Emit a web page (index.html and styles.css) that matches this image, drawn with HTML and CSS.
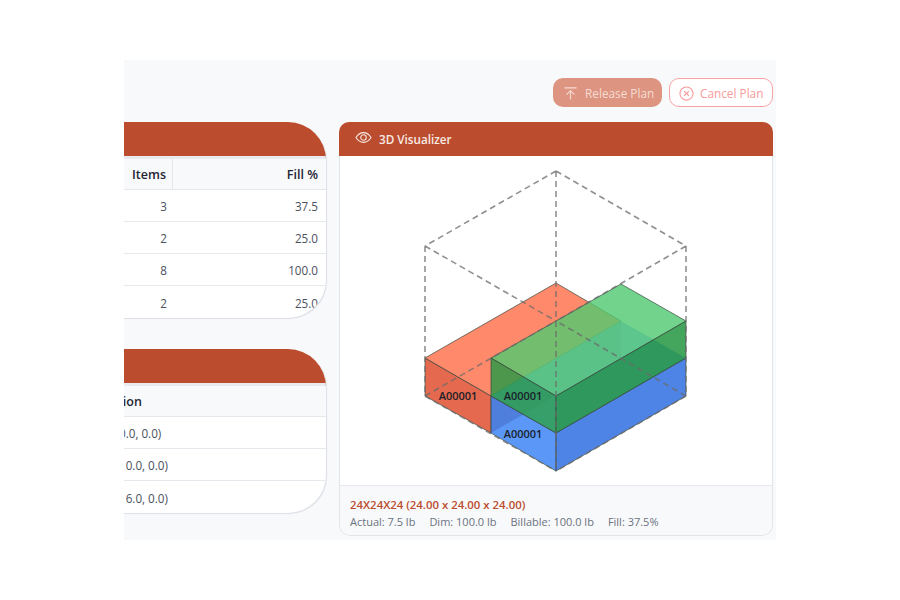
FILE: index.html
```html
<!DOCTYPE html>
<html lang="en">
<head>
  <meta charset="UTF-8" />
  <title>Pack Plan</title>
  <link rel="stylesheet" href="styles.css">
</head>
<body>
<div class="stage">
  <div class="actions">
    <button class="btn btn-release">
      <svg class="btn-icon" viewBox="0 0 16 16"><path d="M1.500 2h13M8 14.500V5M3.800 9.200L8 5l4.200 4.200"/></svg>
      Release Plan
    </button>
    <button class="btn btn-cancel">
      <svg class="btn-icon" viewBox="0 0 16 16"><circle cx="8" cy="8" r="7"/><path d="M5.400 5.400l5.200 5.200M10.600 5.400l-5.200 5.200"/></svg>
      Cancel Plan
    </button>
  </div>

  <div class="columns">
    <div class="left-col">
      <div class="card">
        <div class="card-head"></div>
        <table class="plan-table">
          <tr><th class="items">Items</th><th class="num">Fill %</th></tr>
          <tr><td class="items">3</td><td class="num">37.5</td></tr>
          <tr><td class="items">2</td><td class="num">25.0</td></tr>
          <tr><td class="items">8</td><td class="num">100.0</td></tr>
          <tr><td class="items">2</td><td class="num">25.0</td></tr>
        </table>
      </div>
      <div class="card">
        <div class="card-head"></div>
        <table class="plan-table">
          <tr><th class="pos">Position</th></tr>
          <tr><td class="pos">(0.0, 0.0, 0.0)</td></tr>
          <tr><td class="pos">(12.0, 0.0, 0.0)</td></tr>
          <tr><td class="pos">(12.0, 6.0, 0.0)</td></tr>
        </table>
      </div>
    </div>

    <div class="viz">
      <div class="viz-head">
        <svg class="eye" viewBox="0 0 18 12"><path d="M.8 6C3 2.400 5.800.7 9 .7S15 2.400 17.200 6C15 9.600 12.200 11.300 9 11.300S3 9.600.8 6z"/><circle cx="9" cy="6" r="3"/></svg>
        3D Visualizer
      </div>
      <div class="viz-body">
        <svg class="iso" viewBox="339 156 434 329" width="434" height="329">
          <!-- orange box -->
          <polygon class="f org-r" points="491,396 621,321 621,358 491,433"/>
          <polygon class="f org-l" points="425,358 491,396 491,433 425,396"/>
          <polygon class="f org-t" points="425,358 556,283 621,321 491,396"/>
          <!-- blue box -->
          <polygon class="f blue-t" points="491,396 621,321 686,358 556,433"/>
          <polygon class="f blue-l" points="491,396 556,433 556,471 491,433"/>
          <polygon class="f blue-r" points="556,433 686,358 686,396 556,471"/>
          <!-- green box -->
          <polygon class="f grn-t" points="491,358 621,284 686,321 556,396"/>
          <polygon class="f grn-l" points="491,358 556,396 556,433 491,396"/>
          <polygon class="f grn-r" points="556,396 686,321 686,358 556,433"/>
          <text class="lbl" x="458" y="400">A00001</text>
          <text class="lbl" x="523" y="400">A00001</text>
          <text class="lbl" x="523" y="438">A00001</text>
          <!-- container -->
          <path class="dash" d="M556 171L425 246M556 171L686 246M425 246L556 321M686 246L556 321M556 171V471M425 246V396M686 246V396M425 396L556 321M686 396L556 321M425 396L556 471M686 396L556 471"/>
        </svg>
      </div>
      <div class="viz-foot">
        <div class="foot-title">24X24X24 (24.00 x 24.00 x 24.00)</div>
        <div class="foot-stats">
          <span>Actual: 7.5 lb</span>
          <span>Dim: 100.0 lb</span>
          <span>Billable: 100.0 lb</span>
          <span>Fill: 37.5%</span>
        </div>
      </div>
    </div>
  </div>
</div>
</body>
</html>
```

FILE: styles.css
```css
body {
  margin: 0;
  background: #fff;
  font-family: 'Open Sans', 'Noto Sans', sans-serif;
  font-size: 12px;
}
.stage {
  width: 652px;
  height: 480px;
  margin: 60px auto 0;
  background: #f8f9fb;
  overflow: hidden;
  box-sizing: border-box;
  padding: 18px 3px 4px 0;
}
.actions {
  display: flex;
  justify-content: flex-end;
  gap: 7px;
  height: 29px;
  margin-bottom: 15px;
}
.btn {
  display: flex;
  align-items: center;
  height: 29px;
  box-sizing: border-box;
  font-family: inherit;
  font-size: 11.8px;
  border-radius: 10px;
  padding: 1px 0 0;
}
.btn-release {
  width: 109px;
  background: #dd9480;
  color: #f5dcd4;
  border: none;
  padding-left: 10px;
  gap: 7px;
}
.btn-cancel {
  width: 104px;
  background: #fff;
  color: #f79b9b;
  border: 1px solid #f9a3a3;
  padding-left: 9px;
  gap: 6px;
}
.btn-icon {
  width: 15px;
  height: 15px;
  fill: none;
  stroke: currentColor;
  stroke-width: 1.2;
}
.columns {
  display: flex;
  gap: 12px;
}
.left-col {
  width: 203px;
  display: flex;
  flex-direction: column;
  gap: 31px;
}
.card {
  width: 262px;
  margin-left: -60px;
  border-radius: 38px;
  background: #fff;
  overflow: hidden;
  box-shadow: 1px 1px 1px #dcdfe6;
}
.card-head {
  height: 34px;
  background: #bb4d2e;
  border-bottom: 3px solid #e8eaef;
}
.plan-table {
  width: 100%;
  border-collapse: separate;
  border-spacing: 0;
  table-layout: fixed;
  color: #4a5160;
  font-size: 11.7px;
}
.plan-table th,
.plan-table td {
  box-sizing: border-box;
  padding: 0 8px 0 0;
  border-bottom: 1px solid #e6e8ee;
}
.plan-table th {
  height: 31px;
  background: #f8f9fb;
  color: #1f2633;
  font-size: 12.5px;
  font-weight: 600;
}
.plan-table td {
  height: 32px;
  padding-top: 1px;
}
.plan-table tr:last-child td { border-bottom: none; }
.plan-table .items {
  width: 109px;
  text-align: right;
  padding-right: 6px;
}
.plan-table th.items { border-right: 1px solid #e6e8ee; }
.num { text-align: right; }
.plan-table .pos {
  text-align: left;
  padding-left: 29px;
}
.viz {
  width: 434px;
  height: 414px;
  border-radius: 10px;
  background: #fff;
  overflow: hidden;
  display: flex;
  flex-direction: column;
}
.viz-head {
  height: 34px;
  flex: none;
  display: flex;
  align-items: center;
  gap: 7px;
  padding-left: 16px;
  background: #bb4d2e;
  color: #f8e9e4;
  font-size: 11.7px;
  font-weight: 600;
}
.eye {
  width: 17px;
  height: 11px;
  fill: none;
  stroke: #f8e9e4;
  stroke-width: 1.2;
  margin-top: -3px;
}
.viz-body {
  flex: 1;
  overflow: hidden;
  border-left: 1px solid #e2e5ea;
  border-right: 1px solid #e2e5ea;
}
.iso {
  display: block;
  margin-left: -1px;
}
.f {
  stroke: #3c4a42;
  stroke-width: 1;
  stroke-opacity: 0.7;
  fill-opacity: 0.8;
}
.org-r { stroke: none; fill: #b46956; }
.org-l { fill: #dd4322; }
.org-t { fill: #ff6d46; }
.blue-t { stroke: none; fill: #7aa8ff; }
.blue-l { fill: #327df5; }
.blue-r { fill: #2265e0; }
.grn-t { fill: #4fc96f; }
.grn-l { fill: #1f9a45; }
.grn-r { fill: #159033; }
.lbl {
  font-size: 11px;
  font-weight: 600;
  fill: #1a1f2a;
  text-anchor: middle;
}
.dash {
  fill: none;
  stroke: #6b6b6b;
  stroke-opacity: 0.75;
  stroke-width: 1.6;
  stroke-dasharray: 6 4;
}
.viz-foot {
  height: 51px;
  flex: none;
  box-sizing: border-box;
  padding: 10px 10px 0;
  background: #f8f9fb;
  border: 1px solid #e2e5ea;
  border-top-color: #e6e8ee;
  border-radius: 0 0 10px 10px;
  font-size: 11px;
  line-height: 17px;
}
.foot-title {
  color: #bb4d2e;
  font-size: 11.4px;
  font-weight: 600;
}
.foot-stats {
  display: flex;
  gap: 14px;
  color: #6b7280;
}
```
